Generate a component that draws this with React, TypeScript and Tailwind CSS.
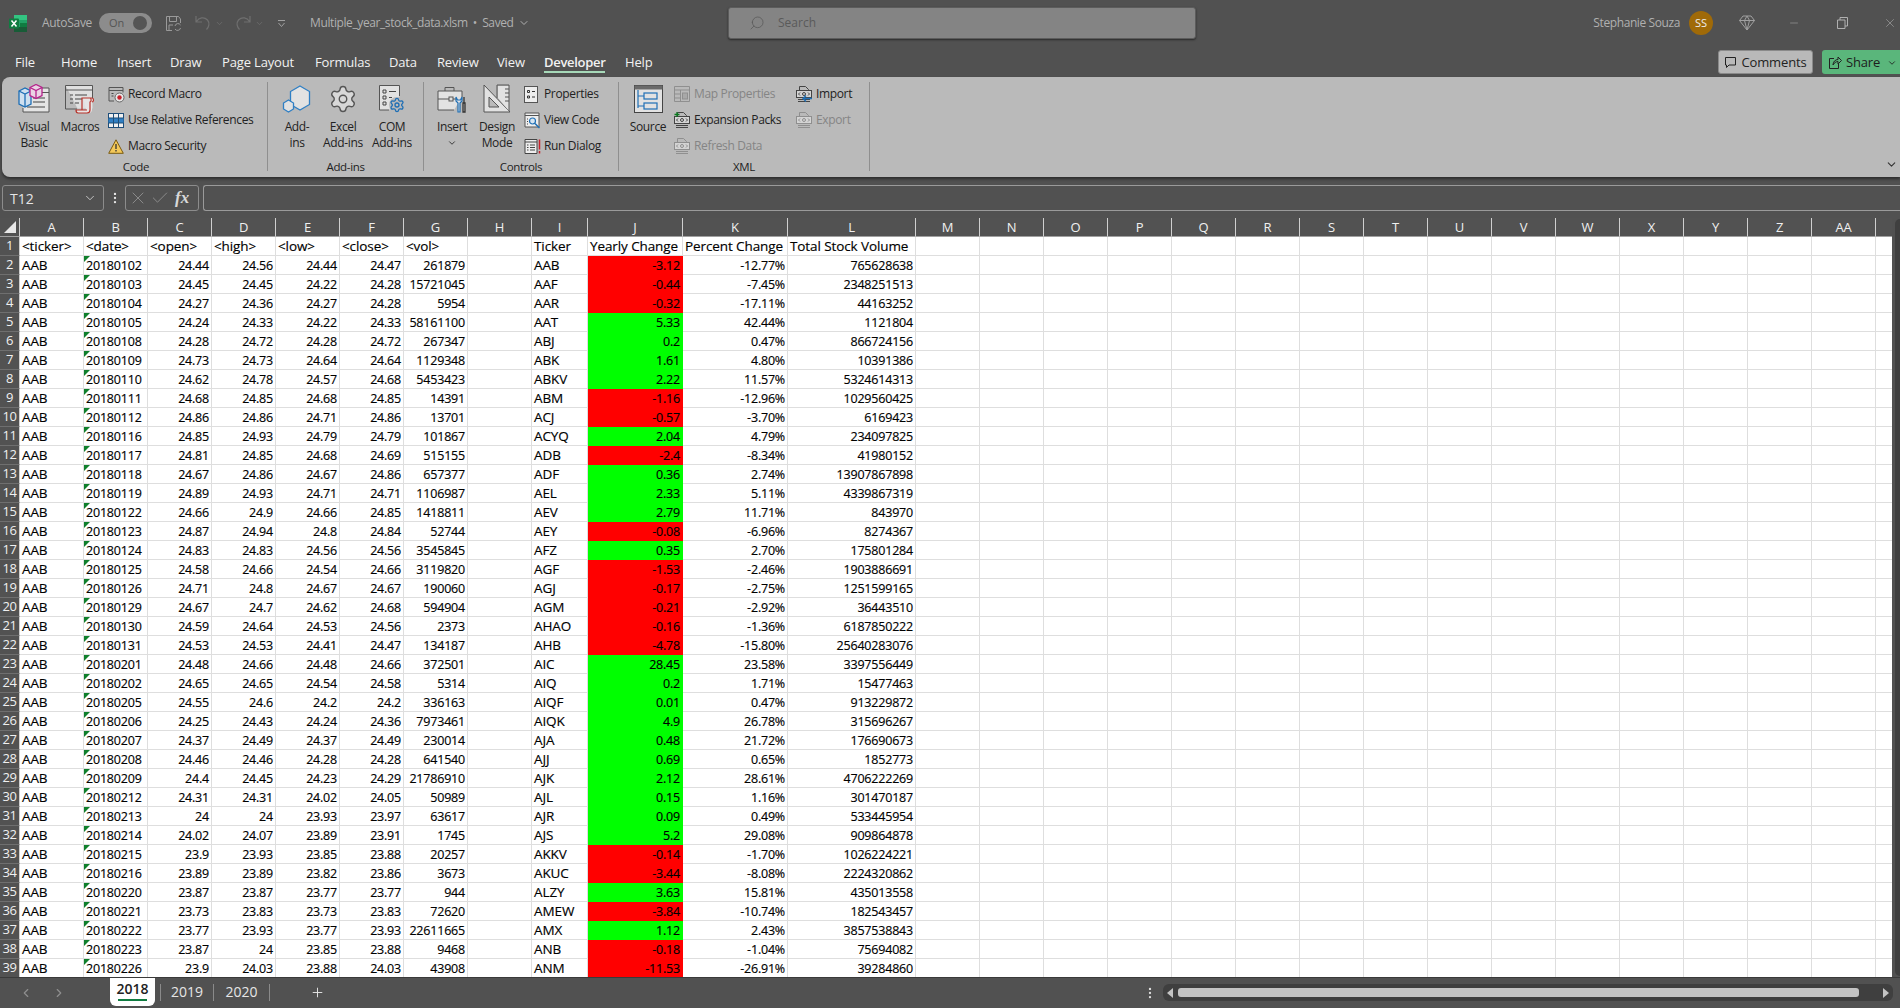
import { ChevronDown, ChevronLeft, ChevronRight, Minus, Plus, Search, Settings, X, Check, MoreVertical } from "lucide-react";
import type { ReactNode } from "react";

/* Excel, Developer tab, dark grey theme. Sheet data is kept as pipe strings, one row per line. */

const COLS = "grid grid-cols-[20px_repeat(8,64px)_56px_95px_105px_128px_repeat(15,64px)_17px]";

const columnNames = ["A","B","C","D","E","F","G","H","I","J","K","L","M","N","O","P","Q","R","S","T","U","V","W","X","Y","Z","AA",""];

const prices = `20180102|24.44|24.56|24.44|24.47|261879
20180103|24.45|24.45|24.22|24.28|15721045
20180104|24.27|24.36|24.27|24.28|5954
20180105|24.24|24.33|24.22|24.33|58161100
20180108|24.28|24.72|24.28|24.72|267347
20180109|24.73|24.73|24.64|24.64|1129348
20180110|24.62|24.78|24.57|24.68|5453423
20180111|24.68|24.85|24.68|24.85|14391
20180112|24.86|24.86|24.71|24.86|13701
20180116|24.85|24.93|24.79|24.79|101867
20180117|24.81|24.85|24.68|24.69|515155
20180118|24.67|24.86|24.67|24.86|657377
20180119|24.89|24.93|24.71|24.71|1106987
20180122|24.66|24.9|24.66|24.85|1418811
20180123|24.87|24.94|24.8|24.84|52744
20180124|24.83|24.83|24.56|24.56|3545845
20180125|24.58|24.66|24.54|24.66|3119820
20180126|24.71|24.8|24.67|24.67|190060
20180129|24.67|24.7|24.62|24.68|594904
20180130|24.59|24.64|24.53|24.56|2373
20180131|24.53|24.53|24.41|24.47|134187
20180201|24.48|24.66|24.48|24.66|372501
20180202|24.65|24.65|24.54|24.58|5314
20180205|24.55|24.6|24.2|24.2|336163
20180206|24.25|24.43|24.24|24.36|7973461
20180207|24.37|24.49|24.37|24.49|230014
20180208|24.46|24.46|24.28|24.28|641540
20180209|24.4|24.45|24.23|24.29|21786910
20180212|24.31|24.31|24.02|24.05|50989
20180213|24|24|23.93|23.97|63617
20180214|24.02|24.07|23.89|23.91|1745
20180215|23.9|23.93|23.85|23.88|20257
20180216|23.89|23.89|23.82|23.86|3673
20180220|23.87|23.87|23.77|23.77|944
20180221|23.73|23.83|23.73|23.83|72620
20180222|23.77|23.93|23.77|23.93|22611665
20180223|23.87|24|23.85|23.88|9468
20180226|23.9|24.03|23.88|24.03|43908`.split("\n").map((l) => l.split("|"));

const summary = `AAB|-3.12|-12.77%|765628638
AAF|-0.44|-7.45%|2348251513
AAR|-0.32|-17.11%|44163252
AAT|5.33|42.44%|1121804
ABJ|0.2|0.47%|866724156
ABK|1.61|4.80%|10391386
ABKV|2.22|11.57%|5324614313
ABM|-1.16|-12.96%|1029560425
ACJ|-0.57|-3.70%|6169423
ACYQ|2.04|4.79%|234097825
ADB|-2.4|-8.34%|41980152
ADF|0.36|2.74%|13907867898
AEL|2.33|5.11%|4339867319
AEV|2.79|11.71%|843970
AEY|-0.08|-6.96%|8274367
AFZ|0.35|2.70%|175801284
AGF|-1.53|-2.46%|1903886691
AGJ|-0.17|-2.75%|1251599165
AGM|-0.21|-2.92%|36443510
AHAO|-0.16|-1.36%|6187850222
AHB|-4.78|-15.80%|25640283076
AIC|28.45|23.58%|3397556449
AIQ|0.2|1.71%|15477463
AIQF|0.01|0.47%|913229872
AIQK|4.9|26.78%|315696267
AJA|0.48|21.72%|176690673
AJJ|0.69|0.65%|1852773
AJK|2.12|28.61%|4706222269
AJL|0.15|1.16%|301470187
AJR|0.09|0.49%|533445954
AJS|5.2|29.08%|909864878
AKKV|-0.14|-1.70%|1026224221
AKUC|-3.44|-8.08%|2224320862
ALZY|3.63|15.81%|435013558
AMEW|-3.84|-10.74%|182543457
AMX|1.12|2.43%|3857538843
ANB|-0.18|-1.04%|75694082
ANM|-11.53|-26.91%|39284860`.split("\n").map((l) => l.split("|"));

const tabs = [
  { name: "File", cls: "w-[46px]" },
  { name: "Home", cls: "w-[56px]" },
  { name: "Insert", cls: "w-[53px]" },
  { name: "Draw", cls: "w-[52px]" },
  { name: "Page Layout", cls: "w-[93px]" },
  { name: "Formulas", cls: "w-[74px]" },
  { name: "Data", cls: "w-[48px]" },
  { name: "Review", cls: "w-[60px]" },
  { name: "View", cls: "w-[47px]" },
];

/* ---------- drawings ---------- */

function ExcelLogo() {
  return (
    <svg width="18" height="17" viewBox="0 0 18 17">
      <rect x="5" y="0" width="13" height="17" rx="1" fill="#21a366" />
      <rect x="5" y="0" width="13" height="5" fill="#33c481" />
      <rect x="11" y="8" width="7" height="4.500" fill="#107c41" />
      <rect x="5" y="12" width="13" height="5" fill="#185c37" />
      <rect x="0" y="3.500" width="10" height="10" rx="1" fill="#107c41" />
      <path d="M2.500 5.500l5 6M7.500 5.500l-5 6" stroke="#fff" strokeWidth="1.500" />
    </svg>
  );
}

function VisualBasicIcon() {
  return (
    <svg width="32" height="30" viewBox="0 0 32 30" fill="none">
      <path d="M14 4h17v24H5v-4" fill="#e4e4e4" stroke="#555" />
      <path d="M14 8.500h17" stroke="#555" />
      <path d="M15 14h12M15 18h12M9 23h18" stroke="#444" />
      <path d="M1 7l6-3 6 3v13l-6 3-6-3z" fill="#cfe0f0" stroke="#1f6fb5" strokeWidth="1.300" />
      <path d="M1 7l6 3 6-3M7 10v13" stroke="#1f6fb5" strokeWidth="1.300" />
      <path d="M12 3.500l6-3 6 3v8l-6 3-6-3z" fill="#ead3e4" stroke="#b5228b" strokeWidth="1.300" />
      <path d="M12 3.500l6 3 6-3M18 6.500v8" stroke="#b5228b" strokeWidth="1.300" />
    </svg>
  );
}

function MacrosIcon() {
  return (
    <svg width="32" height="30" viewBox="0 0 32 30" fill="none">
      <path d="M1.500 1.500h27v23h-15" fill="#e0e0e0" />
      <path d="M13 25H1.500V1.500h27V14" stroke="#555" />
      <path d="M1.500 6h27" stroke="#555" />
      <path d="M6 11h3M11 11h12M6 15h3M11 15h7M6 19h3M11 19h4" stroke="#444" />
      <path d="M19 14h9v1h2v3h-2v8c0 2-2 3-3 3H15c-1.500 0-2-1-2-2v-1h9v-1" fill="#e6e6e6" />
      <path d="M18 26V14h10c2 0 2 4 0 4M26 14c1.500 0 1.500 4 0 4v8c0 2-1.500 3-3 3H14c-1.500 0-2-1.500-2-3h11" stroke="#b8322a" strokeWidth="1.200" />
    </svg>
  );
}

function RecordIcon() {
  return (
    <svg width="17" height="17" viewBox="0 0 17 17" fill="none">
      <path d="M1 1.500h14v5M6 15H1V1.500M1 4.500h14" stroke="#555" />
      <path d="M3.500 7.500h2M3.500 10h2" stroke="#444" />
      <circle cx="11.500" cy="11.500" r="4.500" fill="#e8e8e8" stroke="#666" />
      <circle cx="11.500" cy="11.500" r="2.200" fill="#c8202b" />
    </svg>
  );
}

function RelativeIcon() {
  return (
    <svg width="16" height="15" viewBox="0 0 16 15" fill="none">
      <rect x="0.500" y="0.500" width="15" height="14" fill="#f0f0f0" stroke="#1f4e79" />
      <rect x="0.500" y="5" width="15" height="5" fill="#2f7fc4" />
      <path d="M5.500 0.500v14M10.500 0.500v14M0.500 5h15M0.500 10h15" stroke="#1f4e79" />
    </svg>
  );
}

function WarningIcon() {
  return (
    <svg width="16" height="15" viewBox="0 0 16 15">
      <path d="M8 0.800L15.300 14.300H0.700z" fill="#f3c85a" stroke="#7a5a10" />
      <path d="M8 5v5M8 11v1.500" stroke="#333" strokeWidth="1.300" />
    </svg>
  );
}

function AddInsIcon() {
  return (
    <svg width="30" height="28" viewBox="0 0 30 28" fill="none">
      <path d="M18 1l9.500 5.500v13L18 25l-9.500-5.500v-13z" fill="#e2e2e2" stroke="#2f7fc4" strokeWidth="1.300" />
      <path d="M6.500 15l5 3v6l-5 3-5-3v-6z" fill="#e2e2e2" stroke="#2f7fc4" strokeWidth="1.300" />
    </svg>
  );
}

function ComAddInsIcon() {
  return (
    <svg width="28" height="30" viewBox="0 0 28 30" fill="none">
      <path d="M11 26H1.500V1.500h20V12" stroke="#555" fill="#e2e2e2" />
      <path d="M5 6h3v3H5zM5 12h3v3H5zM5 18h3v3H5z" stroke="#444" />
      <path d="M11 7.500h7M11 13.500h3" stroke="#444" />
      <circle cx="19" cy="21" r="8" fill="#bababa" />
      <Settings x="11" y="13" width="16" height="16" stroke="#1f6fb5" strokeWidth={2} />
    </svg>
  );
}

function InsertIcon() {
  return (
    <svg width="30" height="28" viewBox="0 0 30 28" fill="none">
      <path d="M8 6V2.500h9V6" stroke="#555" />
      <path d="M17 25H1V6h24v6" stroke="#555" fill="#e2e2e2" />
      <path d="M1 14h11M16 14h4" stroke="#555" />
      <rect x="12" y="12" width="4" height="4" stroke="#555" />
      <path d="M19 12v4l2 2v9h2v-9l2-2v-4l-1.500 3h-3z" stroke="#1f6fb5" strokeWidth="1.200" fill="#e2e2e2" />
      <path d="M27 12v6M26 18h2v9h-2z" stroke="#333" strokeWidth="1.300" />
    </svg>
  );
}

function DesignIcon() {
  return (
    <svg width="28" height="30" viewBox="0 0 28 30" fill="none">
      <path d="M1 1v27h26z" fill="#e2e2e2" stroke="#555" />
      <path d="M6 13v10h10z" fill="#bababa" stroke="#555" />
      <path d="M15 14V2h11v25" fill="#e2e2e2" />
      <path d="M14 14V1h12v26M22 5h4M22 9h4M22 13h4M22 17h4" stroke="#555" />
    </svg>
  );
}

function PropertiesIcon() {
  return (
    <svg width="14" height="17" viewBox="0 0 14 17" fill="none">
      <rect x="0.500" y="0.500" width="13" height="16" fill="#eee" stroke="#555" />
      <path d="M3.500 4.500h2v2h-2zM3.500 10h2v2h-2zM8 5.500h3M8 11h3" stroke="#333" />
    </svg>
  );
}

function ViewCodeIcon() {
  return (
    <svg width="17" height="17" viewBox="0 0 17 17" fill="none">
      <path d="M1 1h14v14H1z" stroke="#555" fill="#eee" />
      <path d="M1 3.500h14" stroke="#555" />
      <circle cx="8.500" cy="9" r="3" fill="#d7e6f2" stroke="#1f6fb5" strokeWidth="1.200" />
      <path d="M11 11.500l4.500 4.500" stroke="#1f6fb5" strokeWidth="1.500" />
      <path d="M3 7h1M3 9.500h1M3 12h1" stroke="#444" />
    </svg>
  );
}

function RunDialogIcon() {
  return (
    <svg width="17" height="17" viewBox="0 0 17 17" fill="none">
      <path d="M1 1.500h12v14H1z" stroke="#444" fill="#eee" />
      <path d="M1 4h12M3 7h1.500M6 7h5M3 9.500h1.500M6 9.500h5M3 12h1.500M6 12h5" stroke="#444" />
      <path d="M15.500 1.500v10M15.500 13v2.500" stroke="#c8202b" strokeWidth="1.500" />
    </svg>
  );
}

function SourceIcon() {
  return (
    <svg width="29" height="28" viewBox="0 0 29 28" fill="none">
      <rect x="0.500" y="0.500" width="28" height="27" fill="#e2e2e2" stroke="#444" />
      <rect x="0.500" y="0.500" width="28" height="4" fill="#6a6a6a" />
      <path d="M4 5v18M4 11h6M4 21h6" stroke="#1f6fb5" strokeWidth="1.200" />
      <rect x="10" y="8" width="13" height="6" stroke="#1f6fb5" strokeWidth="1.200" />
      <rect x="10" y="18" width="13" height="6" stroke="#1f6fb5" strokeWidth="1.200" />
    </svg>
  );
}

function MapPropsIcon() {
  return (
    <svg width="16" height="16" viewBox="0 0 16 16" fill="none" stroke="#8f8f8f">
      <path d="M0.500 0.500h15v15H0.500zM0.500 4h15M0.500 8h6M0.500 12h6M6.500 4v11.500" />
      <rect x="8.500" y="7" width="5" height="6" fill="#a8a8a8" />
    </svg>
  );
}

/* the little xml sheet that several of the XML commands share */
function XmlIcon({ tone = "#444", children }: { tone?: string; children?: ReactNode }) {
  return (
    <svg width="17" height="17" viewBox="0 0 17 17" fill="none">
      <path d="M3.500 4V0.500h6l3 3v1" stroke={tone} />
      <rect x="0.500" y="4.500" width="15" height="7" stroke={tone} fill="#d4d4d4" />
      <path d="M4 6.500L2.500 8 4 9.500M12 6.500L13.500 8 12 9.500" stroke={tone} />
      <circle cx="8" cy="8" r="1.500" stroke={tone} />
      <path d="M2 13.500h12M2 15.500h12" stroke={tone} />
      {children}
    </svg>
  );
}

/* ---------- ribbon parts ---------- */

function BigButton({ icon, lines, cls }: { icon: ReactNode; lines: ReactNode[]; cls: string }) {
  return (
    <div className={`flex flex-col items-center shrink-0 ${cls}`}>
      <div className="flex h-[40px] items-center justify-center">{icon}</div>
      {lines.map((l, i) => (
        <div key={i} className="h-[16px] leading-[16px] whitespace-nowrap text-center">
          {l}
        </div>
      ))}
    </div>
  );
}

function SmallButton({ icon, label, off }: { icon: ReactNode; label: string; off?: boolean }) {
  return (
    <div className={`flex h-[26px] items-center whitespace-nowrap ${off ? "text-[#858585]" : ""}`}>
      <span className="flex w-[20px] shrink-0 items-center">{icon}</span>
      {label}
    </div>
  );
}

function Group({ label, cls, children }: { label: string; cls: string; children: ReactNode }) {
  return (
    <div className={`flex shrink-0 flex-col ${cls}`}>
      <div className="flex h-[80px]">{children}</div>
      <div className="h-[16px] text-center text-[11.500px] leading-[16px]">{label}</div>
    </div>
  );
}

const Divider = () => <div className="my-[3px] h-[89px] w-px shrink-0 bg-[#8f8f8f]" />;

function Ribbon() {
  return (
    <div className="relative ml-[2px] flex h-[100px] shrink-0 rounded-l-lg bg-[#bababa] pt-[2px] text-[12px] tracking-[-0.35px] text-[#222] shadow-[0_2px_3px_rgba(0,0,0,0.45)]">
      <Group label="Code" cls="w-[265px] pl-[3px]">
        <BigButton cls="ml-[6px] w-[46px]" icon={<VisualBasicIcon />} lines={["Visual", "Basic"]} />
        <BigButton cls="w-[46px]" icon={<MacrosIcon />} lines={["Macros"]} />
        <div className="ml-[5px] flex flex-col pt-[2px]">
          <SmallButton icon={<RecordIcon />} label="Record Macro" />
          <SmallButton icon={<RelativeIcon />} label="Use Relative References" />
          <SmallButton icon={<WarningIcon />} label="Macro Security" />
        </div>
      </Group>
      <Divider />
      <Group label="Add-ins" cls="w-[155px]">
        <BigButton cls="ml-[8px] w-[42px]" icon={<AddInsIcon />} lines={["Add-", "ins"]} />
        <BigButton cls="ml-[2px] w-[46px]" icon={<Settings size={30} strokeWidth={1.100} color="#555" fill="#d8d8d8" />} lines={["Excel", "Add-ins"]} />
        <BigButton cls="ml-[1px] w-[50px]" icon={<ComAddInsIcon />} lines={["COM", "Add-ins"]} />
      </Group>
      <Divider />
      <Group label="Controls" cls="w-[194px]">
        <BigButton cls="ml-[7px] w-[42px]" icon={<InsertIcon />} lines={["Insert", <ChevronDown key="c" size={10} className="mx-auto mt-[3px]" />]} />
        <BigButton cls="ml-[1px] w-[46px]" icon={<DesignIcon />} lines={["Design", "Mode"]} />
        <div className="ml-[4px] flex flex-col pt-[2px]">
          <SmallButton icon={<PropertiesIcon />} label="Properties" />
          <SmallButton icon={<ViewCodeIcon />} label="View Code" />
          <SmallButton icon={<RunDialogIcon />} label="Run Dialog" />
        </div>
      </Group>
      <Divider />
      <Group label="XML" cls="w-[250px]">
        <BigButton cls="ml-[8px] w-[42px]" icon={<SourceIcon />} lines={["Source"]} />
        <div className="ml-[5px] flex w-[122px] flex-col pt-[2px]">
          <SmallButton off icon={<MapPropsIcon />} label="Map Properties" />
          <SmallButton
            icon={
              <XmlIcon>
                <path d="M0.500 2.500h5M3 0v5" stroke="#0a7a1f" strokeWidth="1.300" />
              </XmlIcon>
            }
            label="Expansion Packs"
          />
          <SmallButton off icon={<XmlIcon tone="#8f8f8f" />} label="Refresh Data" />
        </div>
        <div className="flex flex-col pt-[2px]">
          <SmallButton
            icon={
              <XmlIcon>
                <path d="M16 12.500H7M10 9.500l-3 3 3 3" stroke="#1f6fb5" strokeWidth="1.300" />
              </XmlIcon>
            }
            label="Import"
          />
          <SmallButton off icon={<XmlIcon tone="#8f8f8f" />} label="Export" />
        </div>
      </Group>
      <Divider />
      <ChevronDown size={13} className="absolute right-[2px] bottom-[6px] text-[#333]" />
    </div>
  );
}

/* ---------- sheet ---------- */

function Cell({ text, right, fill, note, wide }: { text?: string; right?: boolean; fill?: string; note?: boolean; wide?: boolean }) {
  const lines = fill ? `border-transparent ${fill}` : "border-[#dedede]";
  return (
    <div
      className={`relative h-[19px] overflow-hidden whitespace-nowrap border-r border-b pl-[2px] pr-[2px] ${lines} ${right ? "text-right" : ""} ${wide ? "text-[13.500px] leading-[18px] tracking-[-0.1px]" : "leading-[20px]"}`}
    >
      {note && (
        <span className="absolute top-0 left-0 h-0 w-0 border-t-[6px] border-r-[6px] border-t-[#0f7f2b] border-r-transparent" />
      )}
      {text}
    </div>
  );
}

function RowHead({ n }: { n: number }) {
  return (
    <div className="flex h-[19px] items-center justify-center overflow-hidden border-r border-b border-r-[#cfcfcf] border-b-[#6f6f6f] bg-[#525252] text-[13px] tracking-[-0.5px] text-[#f0f0f0] [-webkit-text-stroke:0]">
      {n}
    </div>
  );
}

function Row({ n }: { n: number }) {
  const p = prices[n - 2];
  const s = summary[n - 2];
  const negative = s[1].startsWith("-");
  return (
    <div className={COLS}>
      <RowHead n={n} />
      <Cell text="AAB" wide />
      <Cell text={p[0]} note />
      {p.slice(1).map((v, i) => (
        <Cell key={i} text={v} right />
      ))}
      <Cell />
      <Cell text={s[0]} wide />
      <Cell text={s[1]} right fill={negative ? "bg-[#ff0000]" : "bg-[#00ff00]"} />
      <Cell text={s[2]} right />
      <Cell text={s[3]} right />
      {Array.from({ length: 16 }, (_, i) => (
        <Cell key={i} />
      ))}
    </div>
  );
}

function Sheet() {
  const head = ["<ticker>", "<date>", "<open>", "<high>", "<low>", "<close>", "<vol>", "", "Ticker", "Yearly Change", "Percent Change", "Total Stock Volume"];
  return (
    <div className="flex min-h-0 flex-1">
      <div className="w-[1892px] overflow-hidden bg-white text-[12.500px] tracking-[-0.2px] text-black [-webkit-text-stroke:0.15px_black]">
        <div className={`${COLS} h-[19px] bg-[#525252] [-webkit-text-stroke:0]`}>
          <div className="relative border-r border-b border-r-[#cfcfcf] border-b-[#a0a0a0]">
            <span className="absolute right-[3px] bottom-[3px] h-0 w-0 border-b-[12px] border-l-[12px] border-b-[#e8e8e8] border-l-transparent" />
          </div>
          {columnNames.map((c, i) => (
            <div key={i} className="overflow-hidden border-r border-b border-r-[#cfcfcf] border-b-[#a0a0a0] text-center text-[13px] leading-[19px] text-[#f0f0f0]">
              {c}
            </div>
          ))}
        </div>
        <div className={COLS}>
          <RowHead n={1} />
          {head.map((h, i) => (
            <Cell key={i} text={h} wide />
          ))}
          {Array.from({ length: 16 }, (_, i) => (
            <Cell key={i} />
          ))}
        </div>
        {prices.map((_, i) => (
          <Row key={i} n={i + 2} />
        ))}
      </div>
      <div className="flex w-[8px] justify-end pt-[1px] pb-[1px]">
        <div className="h-full w-[5px] rounded-l-md bg-[#3f3f3f]" />
      </div>
    </div>
  );
}

function SheetTabs() {
  return (
    <div className="flex h-[31px] shrink-0 border-t border-[#3a3a3a] bg-[#515151] text-[14px] text-[#e6e6e6]">
      <div className="flex w-[110px] items-center pl-[19px] text-[#8f8f8f]">
        <ChevronLeft size={14} />
        <ChevronRight size={14} className="ml-[19px]" />
      </div>
      <div className="flex h-[28px] w-[45px] flex-col items-center rounded-b-md bg-white font-semibold text-[#222]">
        <span className="h-[21px] leading-[21px]">2018</span>
        <span className="h-[2px] w-[29px] bg-[#107c41]" />
      </div>
      <div className="mt-[6px] ml-[5px] h-[17px] w-px bg-[#8a8a8a]" />
      <div className="w-[52px] pt-[4px] text-center leading-[20px]">2019</div>
      <div className="mt-[6px] h-[17px] w-px bg-[#8a8a8a]" />
      <div className="w-[55px] pt-[4px] text-center leading-[20px]">2020</div>
      <div className="mt-[6px] h-[17px] w-px bg-[#8a8a8a]" />
      <Plus size={15} strokeWidth={1.500} className="mt-[7px] ml-[40px]" />
      <MoreVertical size={14} className="mt-[8px] ml-[818px] text-[#ddd]" />
      <div className="mt-[6px] ml-[6px] flex h-[17px] w-[730px] items-center rounded-md bg-[#3f3f3f] px-[4px] text-[#c4c4c4]">
        <span className="h-0 w-0 border-y-[5px] border-r-[6px] border-y-transparent border-r-[#c4c4c4]" />
        <span className="ml-[5px] h-[9px] w-[681px] rounded-[3px] bg-[#c4c4c4]" />
        <span className="ml-auto h-0 w-0 border-y-[5px] border-l-[6px] border-y-transparent border-l-[#c4c4c4]" />
      </div>
    </div>
  );
}

export default function App() {
  return (
    <div className="flex h-screen w-full flex-col overflow-hidden bg-[#515151] font-['Open_Sans',sans-serif] text-[13px]">
      {/* title bar */}
      <div className="flex h-[50px] shrink-0 items-center pb-[4px] text-[#b0b0b0]">
        <div className="flex w-[728px] shrink-0 items-center pl-[9px]">
          <ExcelLogo />
          <span className="ml-[15px] text-[12px] tracking-[-0.3px]">AutoSave</span>
          <div className="ml-[7px] flex h-[20px] w-[53px] items-center justify-between rounded-full bg-[#8c8c8c] pr-[5px] pl-[10px] text-[11px] text-[#555]">
            On
            <span className="h-[14px] w-[14px] rounded-full bg-[#555]" />
          </div>
          <svg width="17" height="17" viewBox="0 0 17 17" fill="none" stroke="#9a9a9a" className="ml-[13px]">
            <path d="M7 15.500H1.500v-14h12L15.500 4v4" />
            <path d="M4.500 1.500v5h7v-5M4 15v-5h4" />
            <path d="M10 11a3 3 0 0 1 5.500-1M15.500 13a3 3 0 0 1-5.500 1" />
          </svg>
          <svg width="16" height="16" viewBox="0 0 16 16" fill="none" stroke="#6f6f6f" strokeWidth="1.200" className="ml-[13px]">
            <path d="M1 1v6h6M1.500 6.500C4 2.500 9 1.500 12.500 5c2.500 3 1.500 7-1 9.500" />
          </svg>
          <ChevronDown size={9} className="ml-[4px] text-[#6f6f6f]" />
          <svg width="16" height="16" viewBox="0 0 16 16" fill="none" stroke="#6f6f6f" strokeWidth="1.200" className="ml-[11px]">
            <path d="M15 1v6H9M14.500 6.500C12 2.500 7 1.500 3.500 5c-2.500 3-1.500 7 1 9.500" />
          </svg>
          <ChevronDown size={9} className="ml-[4px] text-[#6f6f6f]" />
          <svg width="9" height="9" viewBox="0 0 9 9" fill="none" stroke="#a0a0a0" className="ml-[13px]">
            <path d="M1 1.500h7M1.500 4l3 3.500 3-3.500" />
          </svg>
          <span className="ml-[24px] text-[12px] tracking-[-0.4px]">Multiple_year_stock_data.xlsm</span>
          <span className="ml-[5px] text-[12px] tracking-[-0.4px]">•&nbsp; Saved</span>
          <ChevronDown size={12} className="ml-[4px]" />
        </div>
        <div className="flex h-[32px] w-[468px] shrink-0 items-center rounded-[3px] border border-[#5c5c5c] bg-[#848484] pl-[20px] text-[12px] text-[#5a5a5a] shadow-[0_1px_2px_rgba(0,0,0,0.5)]">
          <Search size={16} strokeWidth={1.200} className="-scale-x-100" />
          <span className="ml-[13px]">Search</span>
        </div>
        <div className="flex flex-1 items-center justify-end">
          <span className="text-[12px] tracking-[-0.4px]">Stephanie Souza</span>
          <span className="ml-[9px] flex h-[24px] w-[24px] items-center justify-center rounded-full bg-[#a06a08] text-[11px] text-[#eee]">SS</span>
          <svg width="16" height="16" viewBox="0 0 16 16" fill="none" stroke="#a0a0a0" className="ml-[26px]">
            <path d="M4 1h8l3.500 4.500L8 15 0.500 5.500zM0.500 5.500h15M5.500 5.500L8 15l2.500-9.500M5.500 5.500L8 1l2.500 4.500" />
          </svg>
          <Minus size={12} strokeWidth={1} className="ml-[33px]" />
          <svg width="11" height="12" viewBox="0 0 11 12" fill="none" stroke="#b0b0b0" className="ml-[37px]">
            <path d="M0.500 3h7.500v8.500H0.500zM3 3V0.500h7.500V9H8" />
          </svg>
          <X size={14} strokeWidth={1} className="mr-[3px] ml-[35px]" />
        </div>
      </div>

      {/* tab row */}
      <div className="flex h-[27px] shrink-0 pl-[15px] tracking-[-0.15px] text-[#f2f2f2]">
        {tabs.map((t) => (
          <div key={t.name} className={`h-[24px] leading-[24px] ${t.cls}`}>
            {t.name}
          </div>
        ))}
        <div className="w-[81px]">
          <div className="h-[23px] w-[61px] border-b-2 border-[#a7d9b9] text-center font-semibold leading-[24px] tracking-[-0.3px]">Developer</div>
        </div>
        <div className="h-[24px] leading-[24px]">Help</div>
        <div className="ml-auto flex h-[24px] w-[95px] items-center justify-center rounded-[3px] border border-[#8a8a8a] bg-[#b9b9b9] pt-[1px] text-[#222]">
          <svg width="12" height="12" viewBox="0 0 12 12" fill="none" stroke="#222" className="mr-[5px]">
            <path d="M0.500 0.500h10v7.500H4l-2.500 2.500V8h-1z" />
          </svg>
          Comments
        </div>
        <div className="ml-[9px] flex h-[24px] w-[78px] items-center rounded-l-[3px] bg-[#5ab67b] pt-[1px] pl-[7px] text-[#1d1d1d]">
          <svg width="13" height="13" viewBox="0 0 13 13" fill="none" stroke="#222" className="mr-[4px]">
            <path d="M5 2.500H0.500v10h9V8M4 9c0-3.500 2.500-5.500 5-5.500V1l3.500 3.500L9 8V5.500C7 5.500 5 7 4 9z" />
          </svg>
          Share
          <ChevronDown size={10} className="ml-[7px]" />
        </div>
      </div>

      <Ribbon />

      {/* formula bar */}
      <div className="flex h-[41px] shrink-0 items-start pt-[8px] pl-[2px] text-[#e6e6e6]">
        <div className="flex h-[26px] w-[102px] items-center justify-between rounded-[3px] border border-[#8c8c8c] pr-[6px] pl-[7px] text-[14px]">
          T12
          <ChevronDown size={14} strokeWidth={1.300} />
        </div>
        <MoreVertical size={14} className="mt-[6px] ml-[4px]" />
        <div className="ml-[3px] flex h-[26px] w-[74px] items-center rounded-[3px] border border-[#8c8c8c] pl-[2px] text-[#8f8f8f]">
          <X size={20} strokeWidth={1.100} />
          <Check size={20} strokeWidth={1.100} className="ml-[2px]" />
          <span className="ml-[5px] font-['Liberation_Serif',serif] text-[17px] font-bold italic text-[#d8d8d8]">fx</span>
        </div>
        <div className="ml-[4px] h-[26px] flex-1 rounded-l-[3px] border border-r-0 border-[#9a9a9a]" />
      </div>

      <Sheet />
      <SheetTabs />
    </div>
  );
}
